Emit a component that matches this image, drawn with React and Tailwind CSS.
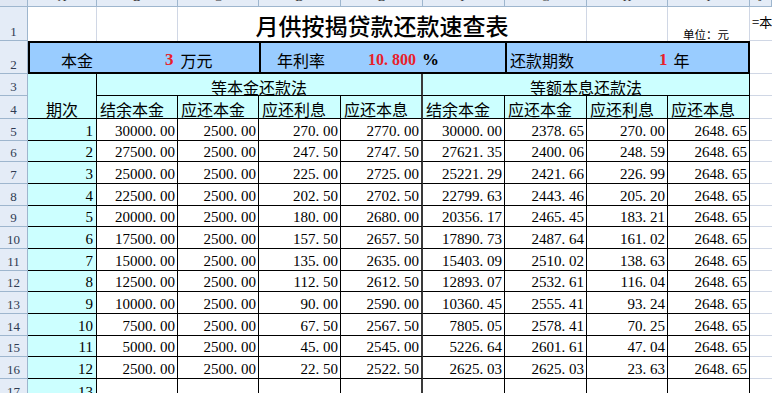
import { Fragment } from 'react'

const serif = "font-['Liberation_Serif','Noto_Sans_CJK_SC',serif]"
const cjk = "font-['Noto_Sans_CJK_SC',sans-serif]"

// 每期数据：结余本金、应还本金、应还利息、应还本息 x 2
const rows = [
  ['30000.00', '2500.00', '270.00', '2770.00', '30000.00', '2378.65', '270.00', '2648.65'],
  ['27500.00', '2500.00', '247.50', '2747.50', '27621.35', '2400.06', '248.59', '2648.65'],
  ['25000.00', '2500.00', '225.00', '2725.00', '25221.29', '2421.66', '226.99', '2648.65'],
  ['22500.00', '2500.00', '202.50', '2702.50', '22799.63', '2443.46', '205.20', '2648.65'],
  ['20000.00', '2500.00', '180.00', '2680.00', '20356.17', '2465.45', '183.21', '2648.65'],
  ['17500.00', '2500.00', '157.50', '2657.50', '17890.73', '2487.64', '161.02', '2648.65'],
  ['15000.00', '2500.00', '135.00', '2635.00', '15403.09', '2510.02', '138.63', '2648.65'],
  ['12500.00', '2500.00', '112.50', '2612.50', '12893.07', '2532.61', '116.04', '2648.65'],
  ['10000.00', '2500.00', '90.00', '2590.00', '10360.45', '2555.41', '93.24', '2648.65'],
  ['7500.00', '2500.00', '67.50', '2567.50', '7805.05', '2578.41', '70.25', '2648.65'],
  ['5000.00', '2500.00', '45.00', '2545.00', '5226.64', '2601.61', '47.04', '2648.65'],
  ['2500.00', '2500.00', '22.50', '2522.50', '2625.03', '2625.03', '23.63', '2648.65'],
]

const letters = ['A', 'B', 'C', 'D', 'E', 'F', 'G', 'H', 'I', 'J']
const heads = ['结余本金', '应还本金', '应还利息', '应还本息', '结余本金', '应还本金', '应还利息', '应还本息']

// SimSun style number: the dot takes a full half-width slot
function Num({ v, w = 'w-[7.5px]' }) {
  const [a, b] = v.split('.')
  return (
    <span className="whitespace-nowrap">
      {a}
      <span className={`inline-block ${w} text-left`}>.</span>
      {b}
    </span>
  )
}

function RowHead({ n }) {
  return (
    <div className={`flex items-end justify-center border-r border-b border-[#9eb6ce] bg-[#e4ecf7] pb-[2px] text-[13px] leading-none text-[#2f3b52] ${serif}`}>
      {n}
    </div>
  )
}

export default function App() {
  return (
    <div className="h-[393px] w-[772px] overflow-hidden bg-white">
      <div className="grid grid-cols-[28px_69px_81px_81px_82px_82px_82px_82px_81px_82px_22px] grid-rows-[7px_34px_33px_22px_23px_22px_21px_22px_22px_21px_22px_22px_21px_22px_22px_21px_22px_22px]">
        {/* column letters, mostly scrolled out of view */}
        <div className="border-r border-b border-[#9eb6ce] bg-[#dfe7f3]" />
        {letters.map((l) => (
          <div key={l} className="overflow-hidden border-r border-b border-[#9eb6ce] bg-[#e4ecf7]">
            <div className={`-mt-[9px] text-center text-[12px] leading-none text-[#333] ${serif}`}>{l}</div>
          </div>
        ))}

        {/* row 1: title */}
        <RowHead n={1} />
        <div className="border-r border-[#d0d7e5]" />
        <div className="border-r border-[#d0d7e5]" />
        <div className={`col-span-5 flex items-end justify-center border-r border-[#d0d7e5] pb-[4px] text-[23px] leading-none font-medium text-black ${cjk}`}>
          月供按揭贷款还款速查表
        </div>
        <div className="border-r border-[#d0d7e5]" />
        <div className={`flex items-end border-r border-[#d0d7e5] pb-[1px] pl-[15px] text-[11.5px] leading-none whitespace-nowrap ${cjk}`}>
          单位：元
        </div>
        <div className={`flex items-center border-b border-[#d0d7e5] pl-[2px] pb-[4px] text-[13px] whitespace-nowrap ${cjk}`}>
          =本
        </div>

        {/* row 2: inputs */}
        <RowHead n={2} />
        <div className={`col-span-3 flex items-end border-2 border-r-0 border-black bg-[#99ccff] pb-[4px] pl-[31px] text-[16px] leading-none ${cjk}`}>
          <span>本金</span>
          <span className={`ml-[72px] text-[17px] font-bold text-[#e8202a] ${serif}`}>3</span>
          <span className="ml-[7px]">万元</span>
        </div>
        <div className={`col-span-3 flex items-end border-2 border-r-0 border-black bg-[#99ccff] pb-[4px] pl-[16px] text-[16px] leading-none ${cjk}`}>
          <span>年利率</span>
          <span className={`ml-[43px] text-[16px] font-bold text-[#e8202a] ${serif}`}>
            <Num v="10.800" w="w-[8px]" />
          </span>
          <span className={`ml-[6px] text-[17px] font-bold ${serif}`}>%</span>
        </div>
        <div className={`col-span-3 flex items-end border-2 border-black bg-[#99ccff] pb-[4px] pl-[3px] text-[16px] leading-none ${cjk}`}>
          <span>还款期数</span>
          <span className={`ml-[85px] text-[17px] font-bold text-[#e8202a] ${serif}`}>1</span>
          <span className="ml-[6px]">年</span>
        </div>
        <div className="border-b border-[#d0d7e5]" />

        {/* row 3: method headers */}
        <RowHead n={3} />
        <div className={`row-span-2 flex items-end justify-center border-r border-b border-black bg-[#ccffff] pb-[1px] text-[16px] leading-none ${cjk}`}>
          期次
        </div>
        <div className={`col-span-4 flex items-end justify-center border-r-2 border-b border-r-[#3a3a3a] border-b-black bg-[#ccffff] text-[16px] leading-none ${cjk}`}>
          等本金还款法
        </div>
        <div className={`col-span-4 flex items-end justify-center border-r border-b border-black bg-[#ccffff] text-[16px] leading-none ${cjk}`}>
          等额本息还款法
        </div>
        <div className="border-b border-[#d0d7e5]" />

        {/* row 4: column headers */}
        <RowHead n={4} />
        {heads.map((h, j) => (
          <div
            key={j}
            className={`flex items-end border-b border-black bg-[#ccffff] pb-[1px] pl-[3px] text-[16px] leading-none whitespace-nowrap ${cjk} ${j === 3 ? 'border-r-2 border-r-[#3a3a3a]' : 'border-r border-r-black'}`}
          >
            {h}
          </div>
        ))}
        <div className="border-b border-[#d0d7e5]" />

        {/* rows 5-16 */}
        {rows.map((r, i) => (
          <Fragment key={i}>
            <RowHead n={i + 5} />
            <div className={`flex items-end justify-end border-r border-b border-black bg-[#ccffff] pb-[1px] pr-[3px] text-[15px] leading-none ${serif}`}>
              {i + 1}
            </div>
            {r.map((v, j) => (
              <div
                key={j}
                className={`flex items-end justify-end border-b border-black bg-white pb-[1px] pr-[2px] text-[15px] leading-none text-black ${serif} ${j === 3 ? 'border-r-2 border-r-[#3a3a3a]' : 'border-r border-r-black'}`}
              >
                <Num v={v} />
              </div>
            ))}
            <div className="border-b border-[#d0d7e5]" />
          </Fragment>
        ))}

        {/* row 17 */}
        <RowHead n={17} />
        <div className={`flex items-end justify-end border-r border-black bg-[#ccffff] pb-[1px] pr-[3px] text-[15px] leading-none ${serif}`}>
          13
        </div>
        {[0, 1, 2, 3, 4, 5, 6, 7].map((j) => (
          <div key={j} className={`bg-white ${j === 3 ? 'border-r-2 border-r-[#3a3a3a]' : 'border-r border-r-black'}`} />
        ))}
        <div />
      </div>
    </div>
  )
}
